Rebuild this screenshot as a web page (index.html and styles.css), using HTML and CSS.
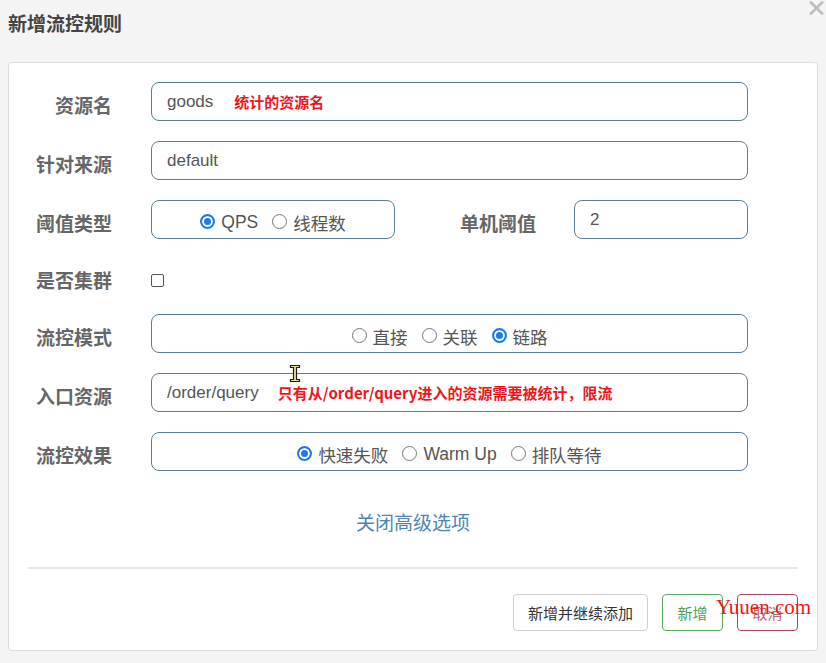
FILE: index.html
```html
<!DOCTYPE html>
<html lang="zh-CN">
<head>
<meta charset="utf-8">
<title>新增流控规则</title>
<link rel="stylesheet" href="styles.css">
</head>
<body>
<div class="dialog">
  <header class="dlg-head">
    <h1 class="dlg-title">新增流控规则</h1>
    <span class="dlg-close">
      <svg width="15" height="14" viewBox="0 0 15 14"><path d="M2 1.5 L13 12.5 M13 1.5 L2 12.5" stroke="#bdbdbd" stroke-width="2.6" stroke-linecap="square"/></svg>
    </span>
  </header>

  <div class="card">
    <div class="form">
      <div class="row">
        <label class="lbl">资源名</label>
        <div class="field">goods<span class="note note-1">统计的资源名</span></div>
      </div>
      <div class="row">
        <label class="lbl">针对来源</label>
        <div class="field">default</div>
      </div>
      <div class="row">
        <label class="lbl">阈值类型</label>
        <div class="field field-radio field-type">
          <span class="opt"><span class="radio on"></span>QPS</span>
          <span class="opt"><span class="radio"></span>线程数</span>
        </div>
        <label class="lbl lbl-2">单机阈值</label>
        <div class="field field-count">2</div>
      </div>
      <div class="row row-check">
        <label class="lbl">是否集群</label>
        <span class="checkbox"></span>
      </div>
      <div class="row">
        <label class="lbl">流控模式</label>
        <div class="field field-radio">
          <span class="opt"><span class="radio"></span>直接</span>
          <span class="opt"><span class="radio"></span>关联</span>
          <span class="opt"><span class="radio on"></span>链路</span>
        </div>
      </div>
      <div class="row">
        <label class="lbl">入口资源</label>
        <div class="field">/order/query<span class="note note-2">只有从/order/query进入的资源需要被统计，限流</span></div>
      </div>
      <div class="row">
        <label class="lbl">流控效果</label>
        <div class="field field-radio">
          <span class="opt"><span class="radio on"></span>快速失败</span>
          <span class="opt"><span class="radio"></span>Warm Up</span>
          <span class="opt"><span class="radio"></span>排队等待</span>
        </div>
      </div>
    </div>

    <div class="adv"><a class="adv-link">关闭高级选项</a></div>
    <div class="divider"></div>

    <div class="actions">
      <button class="btn btn-default">新增并继续添加</button>
      <button class="btn btn-ok">新增</button>
      <button class="btn btn-cancel">取消</button>
    </div>
  </div>
</div>

<div class="watermark">Yuuen.com</div>
<svg class="ibeam" width="12" height="19" viewBox="0 0 12 19">
  <path d="M1.5 1.5 H10.5 V3.5 H7.5 V15.5 H10.5 V17.5 H1.5 V15.5 H4.5 V3.5 H1.5 Z" fill="#e9e3a8" stroke="#1c1c1c" stroke-width="1.2"/>
</svg>
</body>
</html>
```

FILE: styles.css
```css
* { box-sizing: border-box; }

html, body {
  margin: 0;
  padding: 0;
}

body {
  width: 826px;
  height: 663px;
  background: #f4f4f4;
  font-family: "Liberation Sans", "Noto Sans CJK SC", sans-serif;
  color: #555;
  position: relative;
  overflow: hidden;
}

.dialog {
  padding: 0 8px;
}

.dlg-head {
  height: 62px;
  display: flex;
  justify-content: space-between;
  align-items: flex-start;
}

.dlg-title {
  margin: 0;
  padding-top: 12px;
  font-family: "Noto Sans CJK SC", sans-serif;
  font-size: 19px;
  line-height: 21px;
  font-weight: 700;
  color: #444;
}

.dlg-close {
  display: block;
  margin-right: -6px;
  padding-top: 1px;
}
.dlg-close svg { display: block; }

.card {
  background: #fff;
  border: 1px solid #dcdcdc;
  border-radius: 4px;
  padding: 19px 19px 18px;
  height: 589px;
}

.form {
  display: flex;
  flex-direction: column;
  gap: 20px;
  padding-right: 50px;
}

.row {
  display: flex;
  align-items: center;
  height: 39px;
}

.row-check {
  height: 35px;
}

.lbl {
  width: 84px;
  flex: none;
  margin-right: 39px;
  text-align: right;
  font-family: "Noto Sans CJK SC", sans-serif;
  font-size: 19px;
  font-weight: 700;
  color: #666;
  padding-top: 6px;
  line-height: 22px;
}

.lbl-2 {
  width: 141px;
  margin-right: 38px;
}

.field {
  flex: 1;
  height: 39px;
  border: 1px solid #5b7e95;
  border-radius: 8px;
  padding-left: 15px;
  display: flex;
  align-items: center;
  font-size: 17px;
  color: #555;
  white-space: nowrap;
}

.field-type {
  flex: none;
  width: 244px;
}

.field-count {
  flex: none;
  width: 174px;
  padding-left: 15px;
  font-size: 17px;
}

.note {
  font-family: "Noto Sans CJK SC", sans-serif;
  font-weight: 700;
  font-size: 15px;
  color: #f0151c;
}
.note-1 { margin-left: 21px; }
.note-2 { margin-left: 19px; }

.field-radio {
  justify-content: center;
  padding-left: 0;
  padding-top: 5px;
  gap: 14px;
  font-size: 17.5px;
}

.opt {
  display: inline-flex;
  align-items: center;
  gap: 6px;
}

.radio {
  width: 15px;
  height: 15px;
  border-radius: 50%;
  border: 1px solid #767676;
  background: #fff;
  display: inline-block;
  flex: none;
  margin-top: -1px;
}

.radio.on {
  border: 2px solid #1f7ae6;
  background: #1f7ae6;
  box-shadow: inset 0 0 0 2px #fff;
}

.checkbox {
  width: 13px;
  height: 13px;
  border: 1px solid #555;
  border-radius: 2px;
  background: #fff;
  margin-top: 7px;
}

.adv {
  margin-top: 39px;
  text-align: center;
  line-height: 24px;
}

.adv-link {
  font-family: "Noto Sans CJK SC", sans-serif;
  font-size: 19px;
  color: #4d86b5;
  cursor: pointer;
}

.divider {
  margin-top: 30px;
  height: 2px;
  background: #e6e6e6;
}

.actions {
  margin-top: 25px;
  display: flex;
  justify-content: flex-end;
  gap: 14px;
}

.btn {
  height: 37px;
  padding: 0 14px;
  background: #fff;
  border: 1px solid #cfcfcf;
  border-radius: 4px;
  font-family: "Noto Sans CJK SC", sans-serif;
  font-size: 15px;
  color: #333;
}

.btn-ok {
  width: 61px;
  border-color: #5ba862;
  color: #4f9e57;
}

.btn-cancel {
  width: 61px;
  border-color: #a44866;
  color: #b06a72;
}

.watermark {
  position: absolute;
  left: 716px;
  top: 597px;
  font-family: "Liberation Serif", serif;
  font-size: 21px;
  line-height: 21px;
  color: #f21616;
  white-space: nowrap;
}

.ibeam {
  position: absolute;
  left: 289px;
  top: 364px;
}
```
